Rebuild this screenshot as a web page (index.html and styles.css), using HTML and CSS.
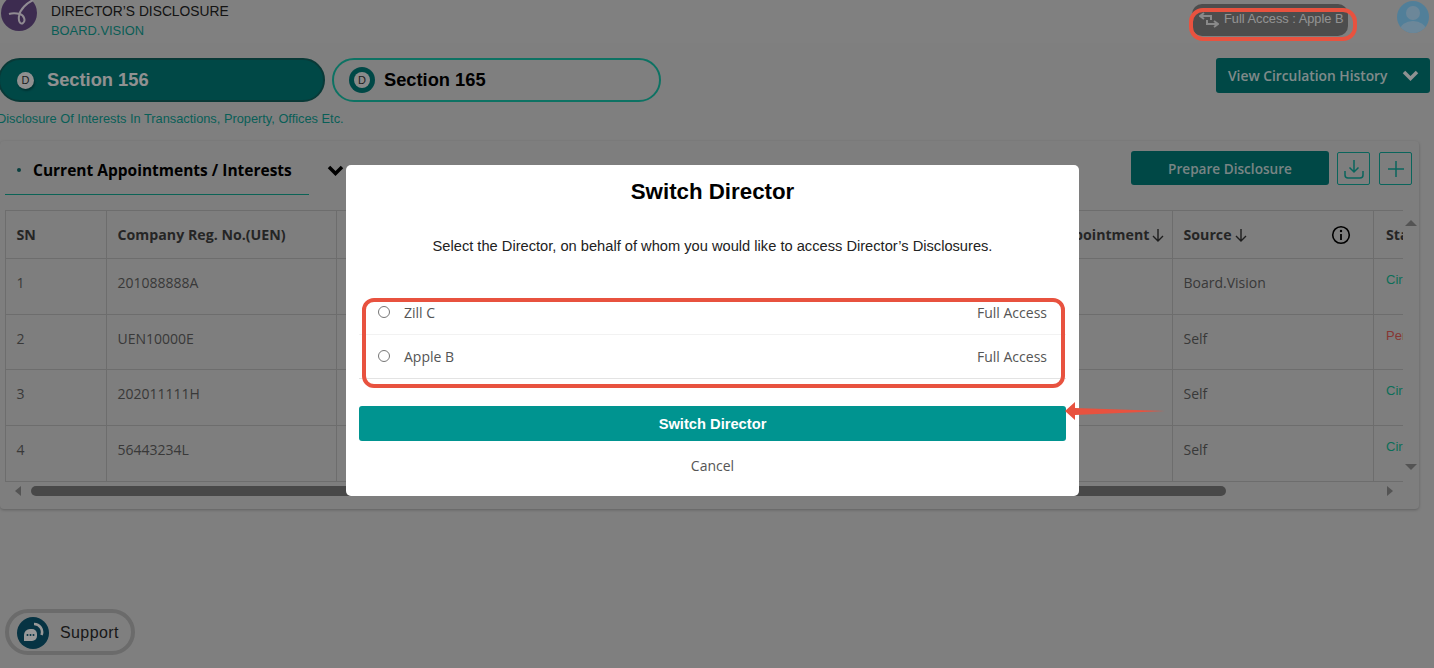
FILE: index.html
```html
<!DOCTYPE html>
<html lang="en">
<head>
<meta charset="utf-8">
<title>Director's Disclosure</title>
<link rel="stylesheet" href="styles.css">
</head>
<body>
<div class="page">
  <header class="topbar">
    <svg class="logo" viewBox="0 0 38 31" width="38" height="31">
      <circle cx="19" cy="13" r="18" fill="#664a86"/>
      <path d="M33 0C27 3 20 9 19 16c-1 6 2 9 4 7 3-2 1-8-3-9-4-1-8-1-11 0" fill="none" stroke="#f0e8f4" stroke-width="2"/>
    </svg>
    <div class="brand">
      <div class="brand-title">DIRECTOR’S DISCLOSURE</div>
      <div class="brand-sub">BOARD.VISION</div>
    </div>
    <div class="access-pill">
      <svg class="swap" viewBox="0 0 20 16" width="20" height="16">
        <path d="M5 1L1 4l4 3M1 4h11v4M15 15l4-3-4-3M19 12H8V8" fill="none" stroke="#e4e4e4" stroke-width="2"/>
      </svg>
      <span>Full Access : Apple B</span>
    </div>
    <svg class="avatar" viewBox="0 0 32 32" width="32" height="32">
      <defs><clipPath id="avatar-clip"><circle cx="16" cy="16" r="16"/></clipPath></defs>
      <circle cx="16" cy="16" r="16" fill="#88d4ff"/>
      <g clip-path="url(#avatar-clip)" fill="#b5e2ff">
        <circle cx="16" cy="12" r="7"/>
        <ellipse cx="16" cy="29" rx="13" ry="9"/>
      </g>
    </svg>
  </header>

  <div class="section-row">
    <div class="tabs">
      <div class="tab tab-active">
        <span class="d-mark">D</span>
        <span>Section 156</span>
      </div>
      <div class="tab tab-plain">
        <span class="d-ring"><span>D</span></span>
        <span>Section 165</span>
      </div>
    </div>
    <button class="circ-btn">
      <span>View Circulation History</span>
      <svg viewBox="0 0 17 11" width="17" height="11"><path d="M2 2l6.500 6.500L15 2" fill="none" stroke="#eef3f3" stroke-width="3.500"/></svg>
    </button>
  </div>
  <p class="subtitle">Disclosure Of Interests In Transactions, Property, Offices Etc.</p>

  <section class="card">
    <div class="toolbar">
      <div class="list-tab">
        <span class="dot"></span>
        <span>Current Appointments / Interests</span>
      </div>
      <svg class="tab-chevron" viewBox="0 0 17 11" width="17" height="11"><path d="M2 2l6.500 6.500L15 2" fill="none" stroke="#000" stroke-width="3.500"/></svg>
      <div class="actions">
        <button class="prepare">Prepare Disclosure</button>
        <button class="icon-btn" aria-label="Download">
          <svg viewBox="0 0 22 22" width="22" height="22"><path d="M11 2v12M6.500 9.500L11 14l4.500-4.500M2 13v4a3 3 0 0 0 3 3h12a3 3 0 0 0 3-3v-4" fill="none" stroke="#11a89a" stroke-width="1.500"/></svg>
        </button>
        <button class="icon-btn icon-btn-last" aria-label="Add">
          <svg viewBox="0 0 20 20" width="20" height="20"><path d="M10 2v16M2 10h16" fill="none" stroke="#11a89a" stroke-width="1.500"/></svg>
        </button>
      </div>
    </div>

    <div class="table-zone">
      <div class="table-view">
        <table class="grid">
          <colgroup>
            <col class="c-sn"><col class="c-uen"><col class="c-mid"><col class="c-mid"><col class="c-date"><col class="c-src"><col class="c-status">
          </colgroup>
          <thead>
            <tr>
              <th>SN</th>
              <th>Company Reg. No.(UEN)</th>
              <th></th>
              <th></th>
              <th><span class="sort">Date Of Appointment<svg viewBox="0 0 14 14" width="14" height="14"><path d="M7 1v12M2 8l5 5 5-5" fill="none" stroke="#333" stroke-width="1.400"/></svg></span></th>
              <th>
                <div class="source-head">
                  <span class="sort">Source<svg viewBox="0 0 14 14" width="14" height="14"><path d="M7 1v12M2 8l5 5 5-5" fill="none" stroke="#333" stroke-width="1.400"/></svg></span>
                  <svg viewBox="0 0 20 20" width="20" height="20"><circle cx="10" cy="10" r="8.300" fill="none" stroke="#000" stroke-width="1.600"/><path d="M10 9v6" stroke="#000" stroke-width="1.800"/><circle cx="10" cy="6" r="1.200"/></svg>
                </div>
              </th>
              <th class="th-status">Status</th>
            </tr>
          </thead>
          <tbody>
            <tr><td>1</td><td>201088888A</td><td></td><td></td><td></td><td>Board.Vision</td><td class="st st-ok">Circulated</td></tr>
            <tr><td>2</td><td>UEN10000E</td><td></td><td></td><td></td><td>Self</td><td class="st st-pending">Pending</td></tr>
            <tr><td>3</td><td>202011111H</td><td></td><td></td><td></td><td>Self</td><td class="st st-ok">Circulated</td></tr>
            <tr><td>4</td><td>56443234L</td><td></td><td></td><td></td><td>Self</td><td class="st st-ok">Circulated</td></tr>
          </tbody>
        </table>
      </div>
      <div class="v-scroll">
        <span class="tri tri-up"></span>
        <span class="tri tri-down"></span>
      </div>
    </div>
    <div class="h-scroll">
      <span class="tri tri-left"></span>
      <span class="thumb"></span>
      <span class="tri tri-right"></span>
    </div>
  </section>

  <div class="support">
    <span class="support-icon">
      <svg viewBox="0 0 22 22" width="22" height="22">
        <path d="M12 2a8 8 0 0 1 7.500 11" fill="none" stroke="#fff" stroke-width="2.600"/>
        <path d="M2 13a6 6 0 0 1 6-6h2a5 5 0 0 1 5 5v2a5 5 0 0 1-5 5H2z" fill="#fff"/>
        <circle cx="5.500" cy="13" r="1" fill="#0a5570"/><circle cx="8.500" cy="13" r="1" fill="#0a5570"/><circle cx="11.500" cy="13" r="1" fill="#0a5570"/>
      </svg>
    </span>
    <span>Support</span>
  </div>

  <div class="overlay"></div>

  <div class="mark mark-pill"></div>

  <div class="modal" role="dialog">
    <h2 class="modal-title">Switch Director</h2>
    <p class="modal-text">Select the Director, on behalf of whom you would like to access Director’s Disclosures.</p>
    <div class="options">
      <label class="option"><input type="radio" name="director"><span class="opt-name">Zill C</span><span>Full Access</span></label>
      <label class="option"><input type="radio" name="director"><span class="opt-name">Apple B</span><span>Full Access</span></label>
    </div>
    <button class="switch-btn">Switch Director</button>
    <div class="cancel">Cancel</div>
    <div class="mark mark-list"></div>
  </div>

  <svg class="mark-arrow" viewBox="0 0 102 20" width="102" height="20">
    <polygon points="0,10 10,1 10,7 100,10 10,14 10,19" fill="#e8523f"/>
  </svg>
</div>
</body>
</html>
```

FILE: styles.css
```css
* { box-sizing: border-box; }
html, body { margin: 0; padding: 0; }
body { font-family: "Liberation Sans", Arial, sans-serif; background: #d4d4d4; }
button { font: inherit; border: 0; padding: 0; }

.page { position: relative; width: 1434px; height: 668px; overflow: hidden; }

.topbar { display: flex; align-items: flex-start; height: 43px; background: #d5d5d5; }
.logo { display: block; flex: none; }
.brand { margin-left: 13px; }
.brand-title { font-size: 13.8px; line-height: 16px; margin-top: 4px; color: #222; }
.brand-sub { font-size: 12.9px; line-height: 15px; margin-top: 3px; color: #119c90; }
.access-pill { display: flex; align-items: flex-start; gap: 5px; width: 156px; height: 32px; margin: 4px 0 0 auto; padding: 8px 0 0 7px; background: #808080; border-radius: 10px; color: #f4f4f4; font-size: 12.8px; line-height: 14px; white-space: nowrap; }
.swap { flex: none; }
.avatar { flex: none; margin: 1px 5px 0 49px; }

.section-row { display: flex; align-items: flex-start; justify-content: space-between; margin-top: 15px; padding-right: 4px; }
.tabs { display: flex; gap: 7px; margin-left: -2px; }
.tab { display: flex; align-items: center; height: 44px; border-radius: 22px; font-weight: 700; font-size: 18.3px; }
.tab-active { width: 327px; padding-left: 17px; gap: 13px; background: #007876; border: 2px solid #0f5f5c; color: #f2f2f2; }
.tab-plain { width: 329px; padding-left: 15px; gap: 9px; background: #d4d4d4; border: 2px solid #17bfa6; color: #000; }
.d-mark { display: flex; align-items: center; justify-content: center; width: 17px; height: 17px; border-radius: 50%; background: #f1f1f1; color: #333; font-size: 11px; font-weight: 400; box-shadow: 1px 2px 2px rgba(0,0,0,.3); }
.d-ring { display: flex; align-items: center; justify-content: center; width: 26px; height: 26px; border-radius: 50%; background: #007876; }
.d-ring span { display: flex; align-items: center; justify-content: center; width: 16px; height: 16px; border-radius: 50%; background: #e8e8e8; color: #333; font-size: 11px; font-weight: 400; }
.circ-btn { display: flex; align-items: center; justify-content: space-between; width: 214px; height: 35px; padding: 0 11px 0 12px; background: #007876; border-radius: 3px; color: #d6e6e5; font-family: "Open Sans", sans-serif; font-size: 13.8px; font-weight: 600; }

.subtitle { margin: 9px 0 0 -3px; font-size: 12.8px; line-height: 15px; color: #0f9e92; white-space: nowrap; }

.card { width: 1419px; height: 368px; margin-top: 15px; padding: 10px 0 0 5px; background: #d2d2d2; border-radius: 4px; box-shadow: 0 1px 3px rgba(0,0,0,.25); }
.toolbar { display: flex; align-items: flex-start; height: 59px; }
.list-tab { display: flex; align-items: center; gap: 12px; width: 304px; height: 44px; padding: 0 0 6px 12px; border-bottom: 1px solid #13a58f; color: #000; font-family: "Open Sans", sans-serif; font-size: 15.5px; font-weight: 700; white-space: nowrap; }
.dot { width: 4px; height: 4px; border-radius: 50%; background: #0f6a6a; }
.tab-chevron { flex: none; margin: 14px 0 0 18px; }
.actions { display: flex; gap: 8px; margin-left: auto; margin-right: 7px; }
.prepare { width: 198px; height: 34px; background: #007876; border-radius: 3px; color: #c9dddc; font-family: "Open Sans", sans-serif; font-size: 13.6px; font-weight: 600; }
.icon-btn { display: flex; align-items: center; justify-content: center; width: 33px; height: 33px; margin-top: 1px; background: none; border: 1px solid #11a89a; border-radius: 2px; }
.icon-btn-last { margin-left: 1px; }

.table-zone { display: flex; height: 273px; }
.table-view { width: 1398px; height: 273px; overflow: hidden; }
.grid { table-layout: fixed; width: 1600px; border-collapse: collapse; font-family: "Open Sans", sans-serif; font-size: 14px; color: #5f5f5f; }
.c-sn { width: 101px; }
.c-uen { width: 230px; }
.c-mid { width: 325px; }
.c-date { width: 186px; }
.c-src { width: 201px; }
.c-status { width: 232px; }
.grid th, .grid td { border: 1px solid #b6b6b6; padding: 0 10.500px; text-align: left; white-space: nowrap; overflow: hidden; }
.grid th { height: 48px; color: #3f3f3f; font-size: 14.2px; font-weight: 700; }
.grid td { height: 55.700px; padding-bottom: 8px; }
.sort { display: inline-flex; align-items: center; gap: 2px; }
.source-head { display: flex; align-items: center; justify-content: space-between; padding-right: 12px; }
.grid .th-status { padding-left: 12px; }
.grid .st { font-family: "Liberation Sans", sans-serif; font-size: 13px; vertical-align: top; padding: 13px 0 0 12px; }
.st-ok { color: #13b893; }
.st-pending { color: #e05a55; }

.v-scroll { display: flex; flex-direction: column; justify-content: space-between; align-items: center; width: 16px; height: 264px; padding: 10px 0 4px; }
.h-scroll { display: flex; align-items: center; width: 1398px; height: 14px; padding: 1px 10px 0 10px; }
.thumb { width: 1195px; height: 10px; margin-left: 10px; border-radius: 5px; background: #787878; }
.tri { display: block; width: 0; height: 0; border-style: solid; border-color: transparent; }
.tri-up { border-width: 0 6px 6px; border-bottom-color: #8c8c8c; }
.tri-down { border-width: 6px 6px 0; border-top-color: #8c8c8c; }
.tri-left { border-width: 5px 6px 5px 0; border-right-color: #8c8c8c; }
.tri-right { border-width: 5px 0 5px 6px; border-left-color: #8c8c8c; margin-left: auto; }

.support { position: absolute; left: 5px; top: 609px; display: flex; align-items: center; gap: 11px; width: 130px; height: 46px; padding: 2px 0 0 8px; border: 4px solid #b2b2b2; border-radius: 23px; color: #2b2b2b; font-size: 16px; letter-spacing: .4px; }
.support-icon { display: flex; align-items: center; justify-content: center; width: 32px; height: 32px; border-radius: 50%; background: #0a5570; }

.overlay { position: absolute; inset: 0; background: rgba(0,0,0,.4); }

.modal { position: absolute; left: 346px; top: 165px; width: 733px; height: 331px; padding: 0 13px; background: #fff; border-radius: 5px; }
.modal-title { margin: 14px 0 0; text-align: center; font-size: 22.3px; line-height: 26px; font-weight: 700; color: #000; }
.modal-text { margin: 32px 0 0; text-align: center; font-size: 14.670px; line-height: 18px; color: #222; }
.options { margin-top: 36px; }
.option { display: flex; align-items: center; height: 44px; padding: 0 19px; border-bottom: 1px solid #f2f2f2; font-family: "Open Sans", sans-serif; font-size: 14px; color: #555; }
.option:last-child { border-bottom-color: #e3e3e3; }
.option input { width: 12px; height: 12px; margin: 0 0 2px 0; flex: none; }
.opt-name { margin: 0 auto 0 14px; }
.switch-btn { display: block; width: 100%; height: 35px; margin-top: 27px; background: #009490; border-radius: 3px; color: #fff; font-size: 14.700px; font-weight: 700; }
.cancel { margin-top: 16px; text-align: center; font-family: "Open Sans", sans-serif; font-size: 14px; line-height: 18px; color: #555; }

.mark { position: absolute; border: 4px solid #e8523f; }
.mark-pill { left: 1189px; top: 8px; width: 168px; height: 33px; border-radius: 14px; }
.mark-list { left: 16px; top: 133px; width: 703px; height: 90px; border-radius: 12px; }
.mark-arrow { position: absolute; left: 1065px; top: 401px; }
```
